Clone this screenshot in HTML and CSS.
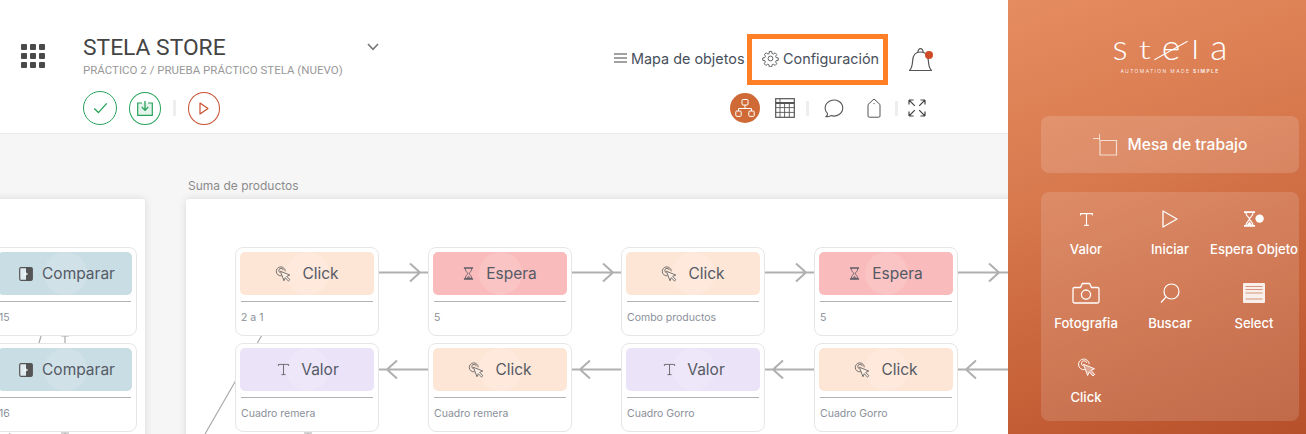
FILE: index.html
```html
<!DOCTYPE html>
<html lang="es">
<head>
<meta charset="utf-8">
<title>Stela</title>
<link rel="stylesheet" href="styles.css">
</head>
<body>
<svg class="defs" aria-hidden="true">
  <symbol id="i-click" viewBox="0 0 20 20"><path d="M8.2 12.2A5.6 5.6 0 1 1 12.8 6.6M6.6 8.3A2.8 2.8 0 1 1 10.3 5.2" fill="none" stroke="currentColor" stroke-width="1"/><path d="M6.8 6.6 18.4 11.3 14.6 13 18.6 17.2 16.8 18.9 12.9 14.6 11.2 18.4Z" fill="#fff" fill-opacity=".35" stroke="currentColor" stroke-width="1" stroke-linejoin="round"/></symbol>
  <symbol id="i-wait" viewBox="0 0 12 14"><path d="M1 1H11M1 13H11" stroke="currentColor" stroke-width="1.5" fill="none"/><path d="M2.4 1.5C2.4 4.6 5 5.6 5.2 7 5 8.4 2.4 9.4 2.4 12.5H9.6C9.6 9.4 7 8.4 6.8 7 7 5.6 9.6 4.6 9.6 1.5" fill="none" stroke="currentColor" stroke-width="1"/><path d="M3.6 12 6 9.4 8.4 12Z" fill="currentColor" fill-opacity=".7"/></symbol>
  <symbol id="i-text" viewBox="0 0 14 14"><path d="M1.5 3.2V1.5H12.5V3.2M7 1.5V12.5M4.8 12.5H9.2" fill="none" stroke="currentColor" stroke-width="1"/></symbol>
  <symbol id="i-compare" viewBox="0 0 14 14"><rect x=".7" y=".7" width="12.6" height="12.6" rx="1.2" fill="#fff" fill-opacity=".45" stroke="currentColor" stroke-width="1.2"/><path d="M7 .7H12.6A.7.7 0 0 1 13.3 1.4V12.6A.7.7 0 0 1 12.6 13.3H7Z" fill="currentColor"/><path d="M5 7H9M7 5.6V8.4" stroke="#fff" stroke-width=".9"/></symbol>
</svg>

<main class="main">
  <header class="top">
    <div class="apps" aria-hidden="true"><i></i><i></i><i></i><i></i><i></i><i></i><i></i><i></i><i></i></div>
    <div class="project">
      <div class="title-row">
        <h1 class="title">STELA STORE</h1>
        <svg class="chev" viewBox="0 0 12 8"><path d="M1 1 6 6.4 11 1" fill="none" stroke="#777" stroke-width="1.6"/></svg>
      </div>
      <p class="crumb">PRÁCTICO 2 / PRUEBA PRÁCTICO STELA (NUEVO)</p>
      <div class="actions">
        <button class="round green big"><svg viewBox="0 0 18 14" width="15" height="12"><path d="M1.5 7.5 6.5 12.5 16.5 1.5" fill="none" stroke="currentColor" stroke-width="1.6"/></svg></button>
        <button class="round green"><svg viewBox="0 0 16 15" width="16" height="15"><path d="M5 2H.7V14.3H15.3V2H11" fill="#27a35a" fill-opacity=".12" stroke="currentColor" stroke-width="1.2"/><path d="M8 0V9M4.8 6 8 9.4 11.2 6" fill="none" stroke="currentColor" stroke-width="1.3"/></svg></button>
        <span class="sep sep-a"></span>
        <button class="round red"><svg viewBox="0 0 10 13" width="10" height="13"><path d="M1 1 9 6.5 1 12Z" fill="none" stroke="currentColor" stroke-width="1.2" stroke-linejoin="round"/></svg></button>
      </div>
    </div>
    <div class="tools">
      <div class="menu-row">
        <a class="menu-link map"><svg viewBox="0 0 13 10" width="13" height="10"><path d="M0 1H13M0 5H13M0 9H13" stroke="#444" stroke-width="1.2"/></svg>Mapa de objetos</a>
        <a class="menu-link config"><svg viewBox="0 0 24 24" width="17" height="17"><path d="M10.3 2h3.4l.5 2.9 1.9.8 2.4-1.7 2.4 2.4-1.7 2.4.8 1.9 2.9.5v3.4l-2.9.5-.8 1.9 1.7 2.4-2.4 2.4-2.4-1.7-1.9.8-.5 2.9h-3.4l-.5-2.9-1.9-.8-2.4 1.7-2.4-2.4 1.7-2.4-.8-1.9-2.9-.5v-3.4l2.9-.5.8-1.9L3.5 6.4l2.4-2.4 2.4 1.7 1.9-.8z" fill="none" stroke="#555" stroke-width="1.3" stroke-linejoin="round"/><circle cx="12" cy="12" r="3.4" fill="none" stroke="#555" stroke-width="1.3"/></svg>Configuración</a>
        <div class="bell"><svg viewBox="0 0 26 27" width="26" height="27"><path d="M1.5 24.5H23.5C21 22 20.6 19 20.4 15 20.2 9 17.5 6 12.5 6S4.8 9 4.6 15C4.4 19 4 22 1.5 24.5Z" fill="none" stroke="#555" stroke-width="1.2" stroke-linejoin="round"/><path d="M10 6C9.6 1.6 15.4 1.6 15 6" fill="none" stroke="#555" stroke-width="1.2"/></svg><span class="dot"></span></div>
      </div>
      <div class="view-row">
        <span class="view-on"><svg viewBox="0 0 20 20" width="20" height="20"><path d="M10 7V10.5M3.5 13V10.5H16.5V13" fill="none" stroke="#fff" stroke-width="1"/><rect x="7" y="1.5" width="6" height="5.5" rx="1" fill="none" stroke="#fff" stroke-width="1"/><rect x=".8" y="13" width="5.4" height="5.4" rx="1" fill="none" stroke="#fff" stroke-width="1"/><rect x="13.8" y="13" width="5.4" height="5.4" rx="1" fill="none" stroke="#fff" stroke-width="1"/></svg></span>
        <svg class="v-grid" viewBox="0 0 20 20" width="20" height="20"><rect x=".7" y=".7" width="18.6" height="18.6" fill="none" stroke="#555" stroke-width="1.2"/><path d="M.7 5H19.3" stroke="#555" stroke-width="2"/><path d="M5 .7V19.3M9.6 5V19.3M14.3 5V19.3M.7 9.6H19.3M.7 14.4H19.3" stroke="#555" stroke-width=".9"/></svg>
        <span class="sep sep-b"></span>
        <svg class="v-chat" viewBox="0 0 20 20" width="20" height="20"><path d="M3.6 15.6A8.8 8 0 1 1 7 17.6C5.6 18.6 3.8 18.9 1.8 18.8 3 18 3.6 17 3.6 15.6Z" fill="none" stroke="#555" stroke-width="1.1" stroke-linejoin="round"/></svg>
        <svg class="v-tag" viewBox="0 0 14 20" width="14" height="20"><path d="M1 6.5 7 1 13 6.5V18A1.2 1.2 0 0 1 11.8 19.2H2.2A1.2 1.2 0 0 1 1 18Z" fill="none" stroke="#555" stroke-width="1" stroke-linejoin="round"/><circle cx="7" cy="5.6" r=".7" fill="#555"/></svg>
        <span class="sep sep-c"></span>
        <svg class="v-exp" viewBox="0 0 18 18" width="18" height="18"><path d="M1 1 6.8 6.8M1 1V5.6M1 1H5.6M17 1 11.2 6.8M17 1V5.6M17 1H12.4M1 17 6.8 11.2M1 17V12.4M1 17H5.6M17 17 11.2 11.2M17 17V12.4M17 17H12.4" fill="none" stroke="#444" stroke-width="1.2"/></svg>
      </div>
    </div>
  </header>

  <section class="canvas">
    <div class="panel panel-a">
      <svg class="wires" viewBox="0 0 245 300" width="245" height="300"><path d="M141 137 139 144M165 137V144M161 137H169M110 234 108 240M165 234V240M161 234H169" fill="none" stroke="#aaa" stroke-width="1.2"/></svg>
      <article class="node n-a r1"><div class="head teal"><svg class="ic ic-cmp"><use href="#i-compare"/></svg><span>Comparar</span></div><p class="sub">15</p></article>
      <article class="node n-a r2"><div class="head teal"><svg class="ic ic-cmp"><use href="#i-compare"/></svg><span>Comparar</span></div><p class="sub">16</p></article>
    </div>

    <div class="panel panel-b">
      <h2 class="panel-name">Suma de productos</h2>
      <svg class="wires" viewBox="0 0 840 240" width="840" height="240">
        <g fill="none" stroke="#b0b0b0" stroke-width="2">
          <path d="M193 73.5H242M224 64.5 234 73.5 224 82.5"/>
          <path d="M386 73.5H435M417 64.5 427 73.5 417 82.5"/>
          <path d="M579 73.5H628M610 64.5 620 73.5 610 82.5"/>
          <path d="M772 73.5H822M803 64.5 813 73.5 803 82.5"/>
          <path d="M193 170.5H242M211 161.5 201 170.5 211 179.5"/>
          <path d="M386 170.5H435M404 161.5 394 170.5 404 179.5"/>
          <path d="M579 170.5H628M597 161.5 587 170.5 597 179.5"/>
          <path d="M772 170.5H822M790 161.5 780 170.5 790 179.5"/>
        </g>
        <path d="M76 136 19 235" fill="none" stroke="#aaa" stroke-width="1.2"/>
        <path d="M118 234H126M122 234V240" fill="none" stroke="#aaa" stroke-width="1.2"/>
      </svg>
      <article class="node c1 r1"><div class="head peach"><svg class="ic ic-click"><use href="#i-click"/></svg><span>Click</span></div><p class="sub">2 a 1</p></article>
      <article class="node c2 r1"><div class="head rose"><svg class="ic ic-wait"><use href="#i-wait"/></svg><span>Espera</span></div><p class="sub">5</p></article>
      <article class="node c3 r1"><div class="head peach"><svg class="ic ic-click"><use href="#i-click"/></svg><span>Click</span></div><p class="sub">Combo productos</p></article>
      <article class="node c4 r1"><div class="head rose"><svg class="ic ic-wait"><use href="#i-wait"/></svg><span>Espera</span></div><p class="sub">5</p></article>
      <article class="node c1 r2"><div class="head lilac"><svg class="ic ic-text"><use href="#i-text"/></svg><span>Valor</span></div><p class="sub">Cuadro remera</p></article>
      <article class="node c2 r2"><div class="head peach"><svg class="ic ic-click"><use href="#i-click"/></svg><span>Click</span></div><p class="sub">Cuadro remera</p></article>
      <article class="node c3 r2"><div class="head lilac"><svg class="ic ic-text"><use href="#i-text"/></svg><span>Valor</span></div><p class="sub">Cuadro Gorro</p></article>
      <article class="node c4 r2"><div class="head peach"><svg class="ic ic-click"><use href="#i-click"/></svg><span>Click</span></div><p class="sub">Cuadro Gorro</p></article>
    </div>
  </section>
</main>

<aside class="side">
  <div class="logo">
    <div class="logo-word"><span class="lt">s</span><span class="lt short">t</span><span class="lt e">e</span><span class="lt short">l</span><span class="lt">a</span></div>
    <div class="logo-tag">AUTOMATION MADE <b>SIMPLE</b></div>
  </div>
  <button class="board"><svg viewBox="0 0 25 22" width="25" height="22"><path d="M7 6.5H23.5V21H7Z" fill="none" stroke="#fff" stroke-opacity=".7" stroke-width="1.2"/><path d="M0 4.5H6M6.5 0V6" stroke="#fff" stroke-opacity=".7" stroke-width="1"/></svg>Mesa de trabajo</button>
  <div class="palette">
    <div class="tool"><svg class="t-ic" width="15" height="15"><use href="#i-text"/></svg><span>Valor</span></div>
    <div class="tool"><svg class="t-ic" viewBox="0 0 18 20" width="18" height="20"><path d="M2 2 16 10 2 18Z" fill="none" stroke="#fff" stroke-width="1.3" stroke-linejoin="round"/></svg><span>Iniciar</span></div>
    <div class="tool"><svg class="t-ic" viewBox="0 0 20 16" width="20" height="16"><path d="M0 1.2H11M0 14.8H11" stroke="#fff" stroke-width="1.8"/><path d="M1.9 1.5C1.9 5 5.3 6.5 5.5 8 5.3 9.5 1.9 11 1.9 14.5H9.1C9.1 11 5.7 9.5 5.5 8 5.7 6.5 9.1 5 9.1 1.5" fill="none" stroke="#fff" stroke-width="1.2"/><path d="M3 14 5.5 10.4 8 14Z" fill="#fff"/><circle cx="15.6" cy="7.6" r="4.2" fill="#fff"/></svg><span>Espera Objeto</span></div>
    <div class="tool"><svg class="t-ic" viewBox="0 0 28 22" width="28" height="22"><path d="M2.5 5.5H8.5L10.4 1.5H17.6L19.5 5.5H25.5A1.5 1.5 0 0 1 27 7V19.5A1.5 1.5 0 0 1 25.5 21H2.5A1.5 1.5 0 0 1 1 19.5V7A1.5 1.5 0 0 1 2.5 5.5Z" fill="none" stroke="#fff" stroke-width="1.3"/><circle cx="14" cy="12.6" r="4.6" fill="none" stroke="#fff" stroke-width="1.3"/></svg><span>Fotografia</span></div>
    <div class="tool"><svg class="t-ic" viewBox="0 0 20 21" width="20" height="21"><circle cx="11.5" cy="8.5" r="7.5" fill="none" stroke="#fff" stroke-width="1.2"/><path d="M6 14 1 19.5" stroke="#fff" stroke-width="1.2"/></svg><span>Buscar</span></div>
    <div class="tool"><svg class="t-ic" viewBox="0 0 22 20" width="22" height="20"><rect width="22" height="20" rx="1" fill="#fff" fill-opacity=".88"/><path d="M2.5 3.5H19.5M2.5 6.5H19.5M2.5 10H19.5M2.5 16H19.5" stroke="#c9785a" stroke-width="1" opacity=".75"/></svg><span>Select</span></div>
    <div class="tool"><svg class="t-ic" width="19" height="19"><use href="#i-click"/></svg><span>Click</span></div>
  </div>
</aside>
</body>
</html>
```
FILE: styles.css
```css
* { box-sizing: border-box; }
html, body { margin: 0; padding: 0; height: 100%; }
body {
  display: flex;
  width: 1306px;
  height: 434px;
  overflow: hidden;
  background: #fff;
  font-family: "Inter", "Liberation Sans", sans-serif;
  color: #444;
}
.defs { display: none; }

/* main column */
.main { width: 1008px; flex: none; display: flex; flex-direction: column; height: 434px; }
.top {
  height: 134px;
  flex: none;
  display: flex;
  align-items: flex-start;
  background: #fff;
  border-bottom: 1px solid #ececec;
  padding: 33px 0 0 21px;
}
.apps {
  display: grid;
  grid-template-columns: repeat(3, 6px);
  grid-auto-rows: 6px;
  gap: 3px;
  margin-top: 11px;
  flex: none;
}
.apps i { background: #4a4a4a; border-radius: 1px; }
.project { margin-left: 38px; width: 300px; flex: none; }
.title-row { display: flex; align-items: flex-start; height: 30px; }
.title {
  margin: 0;
  font: 400 22.8px/30px "Roboto", sans-serif;
  color: #444;
}
.chev { width: 12px; height: 8px; margin: 10px 0 0 auto; position: relative; left: -4px; }
.crumb {
  margin: 1px 0 0;
  font: 400 11.5px/13px "Roboto", sans-serif;
  color: #999;
  white-space: nowrap;
}
.actions { display: flex; align-items: center; margin-top: 14px; }
.round {
  width: 32px;
  height: 33px;
  padding: 0;
  border-radius: 50%;
  background: #fff;
  display: flex;
  align-items: center;
  justify-content: center;
  border: 1.3px solid currentColor;
  margin-right: 12px;
}
.round.big { width: 34px; height: 34px; }
.green { color: #27a35a; }
.red { color: #c9502e; margin-right: 0; }
.sep { display: block; width: 3px; height: 16px; background: #eee; flex: none; }
.sep-a { margin: 0 12px 0 0; }

.tools { margin-left: 231px; width: 336px; flex: none; }
.menu-row { display: flex; align-items: center; height: 52px; }
.menu-link {
  display: flex;
  align-items: center;
  font-size: 14.4px;
  color: #48505c;
  white-space: nowrap;
  padding-bottom: 2px;
}
.map { gap: 4px; width: 133px; }
.config {
  width: 141px;
  height: 51px;
  border: 5px solid #ff7f27;
  padding-left: 10px;
  gap: 4px;
  color: #48505c;
}
.bell { position: relative; width: 26px; height: 27px; margin-left: 20px; }
.bell svg { display: block; }
.dot {
  position: absolute;
  right: 1px;
  top: 5px;
  width: 8px;
  height: 8px;
  border-radius: 50%;
  background: #cf4a26;
}
.view-row { display: flex; align-items: center; height: 30px; margin-top: 8px; padding-left: 116px; }
.view-on {
  width: 30px;
  height: 30px;
  border-radius: 50%;
  background: #cf6a36;
  display: flex;
  align-items: center;
  justify-content: center;
  flex: none;
}
.v-grid { margin-left: 15px; }
.sep-b { margin-left: 11px; height: 15px; }
.v-chat { margin-left: 15px; }
.v-tag { margin-left: 23px; }
.sep-c { margin-left: 14px; height: 15px; }
.v-exp { margin-left: 10px; }

/* free canvas */
.canvas { position: relative; flex: 1; background: #f6f6f6; overflow: hidden; }
.panel {
  position: absolute;
  top: 65px;
  height: 300px;
  background: #fff;
  border-radius: 3px;
  box-shadow: 0 0 8px rgba(0, 0, 0, .12);
}
.panel-a { left: -100px; width: 244.5px; }
.panel-b { left: 186px; width: 900px; }
.panel-name {
  position: absolute;
  left: 2px;
  top: -21px;
  margin: 0;
  font-size: 12px;
  line-height: 16px;
  font-weight: 400;
  color: #8b8b8b;
  white-space: nowrap;
}
.wires { position: absolute; left: 0; top: 0; }
.node {
  position: absolute;
  width: 144px;
  height: 89px;
  background: #fff;
  border: 1px solid #e6e6e6;
  border-radius: 8px;
  padding: 4px;
}
.r1 { top: 48px; }
.r2 { top: 144px; }
.n-a { left: 93px; }
.c1 { left: 49px; }
.c2 { left: 242px; }
.c3 { left: 435px; }
.c4 { left: 628px; }
.head {
  position: relative;
  height: 43px;
  border-radius: 5px;
  display: flex;
  align-items: center;
  justify-content: center;
  gap: 11px;
  font-size: 15.5px;
  color: #555a64;
  overflow: hidden;
}
.head::before {
  content: "";
  position: absolute;
  left: 50%;
  top: 0;
  width: 43px;
  height: 43px;
  margin-left: -21.5px;
  border-radius: 50%;
  background: rgba(255, 255, 255, .14);
}
.head > * { position: relative; }
.peach { background: #fee6d7; }
.rose { background: #fabbbc; }
.lilac { background: #ebe3f8; padding-left: 2px; }
.teal { background: #c9dde5; padding-left: 4px; }
.ic { flex: none; color: #555; }
.ic-cmp { width: 14px; height: 14px; margin-right: -2px; }
.ic-click { width: 16px; height: 16px; }
.ic-wait { width: 11px; height: 13px; color: #5d5d66; margin-right: 1px; }
.ic-text { width: 13px; height: 13px; color: #666; }
.sub {
  margin: 6px 1px 0;
  padding: 9px 0 0;
  border-top: 1.5px solid #b2b2b2;
  font-size: 10.5px;
  line-height: 14px;
  color: #8a8f99;
  white-space: nowrap;
}

/* sidebar */
.side {
  flex: 1;
  height: 434px;
  padding: 0 7px 0 33px;
  background: linear-gradient(160deg, #e58c60 0%, #d97b50 35%, #c8633a 70%, #b6502b 100%);
  color: #fff;
  display: flex;
  flex-direction: column;
}
.logo { height: 116px; padding-top: 32px; text-align: center; width: 258px; }
.logo-word {
  display: flex;
  justify-content: center;
  gap: 11px;
  height: 30px;
  font: 300 35.5px/30px "Lato", sans-serif;
  color: #fff;
}
.lt { display: block; transform-origin: 50% 25px; }
.short { transform: scaleY(.72); }
.logo-word .e { position: relative; }
.logo-word .e::after {
  content: "";
  position: absolute;
  left: -10px;
  top: 18px;
  width: 38px;
  height: 1px;
  background: #fff;
  transform: rotate(-29deg);
}
.logo-tag {
  margin-top: 6px;
  font-size: 5px;
  line-height: 6px;
  letter-spacing: 1.35px;
  color: rgba(255, 255, 255, .85);
  white-space: nowrap;
}
.board {
  height: 57px;
  width: 258px;
  flex: none;
  border: 0;
  border-radius: 8px;
  background: rgba(255, 255, 255, .15);
  color: #fff;
  font: 500 15.6px "Inter", sans-serif;
  display: flex;
  align-items: center;
  justify-content: center;
  gap: 10px;
}
.palette {
  margin-top: 19px;
  width: 258px;
  height: 229px;
  flex: none;
  border-radius: 8px;
  background: rgba(255, 255, 255, .14);
  display: grid;
  grid-template-columns: 84px 84px 84px;
  grid-auto-rows: 74px;
  padding: 13px 0 0 3px;
}
.tool {
  height: 28px;
  display: flex;
  flex-direction: column;
  align-items: center;
  justify-content: center;
  font-size: 13.1px;
  font-weight: 500;
  line-height: 16px;
  white-space: nowrap;
  color: #fff;
  position: relative;
}
.tool span { position: absolute; top: 36px; left: 50%; transform: translateX(-50%); }
.t-ic { display: block; color: #fff; flex: none; }
```
